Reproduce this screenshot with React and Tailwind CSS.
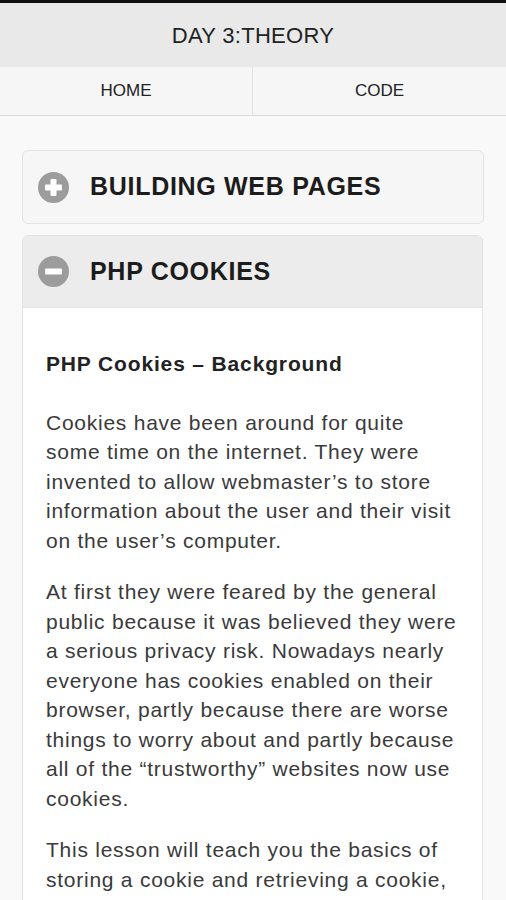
import React from "react";

const font = { fontFamily: '"Liberation Sans", Arial, sans-serif' };

function PlusIcon() {
  return (
    <svg width="31" height="31" viewBox="0 0 31 31" className="shrink-0">
      <circle cx="15.5" cy="15.5" r="15.5" fill="#9c9c9c" />
      <rect x="7" y="12.5" width="17" height="6" rx="1" fill="#fff" />
      <rect x="12.5" y="7" width="6" height="17" rx="1" fill="#fff" />
    </svg>
  );
}

function MinusIcon() {
  return (
    <svg width="31" height="31" viewBox="0 0 31 31" className="shrink-0">
      <circle cx="15.5" cy="15.5" r="15.5" fill="#9c9c9c" />
      <rect x="7" y="12.5" width="17" height="6" rx="1" fill="#fff" />
    </svg>
  );
}

export default function App() {
  return (
    <div className="min-h-[900px] bg-[#f9f9f9] text-[#222]" style={font}>
      <div className="h-[3px] bg-[#111]"></div>
      <header className="h-[64px] bg-[#e9e9e9] flex items-center justify-center">
        <h1 className="text-[22px] text-[#222] tracking-[0.3px]">DAY 3:THEORY</h1>
      </header>
      <nav className="h-[49px] bg-[#f6f6f6] border-b border-[#dcdcdc] flex">
        <div className="w-[253px] flex items-center justify-center border-r border-[#e2e2e2] text-[17px] text-[#222]">HOME</div>
        <div className="flex-1 flex items-center justify-center text-[17px] text-[#222]">CODE</div>
      </nav>

      <main className="px-[22px] pt-[34px]">
        <section className="rounded-[6px] border border-[#e3e3e3] bg-[#f6f6f6] h-[74px] flex items-center pl-[15px] gap-[21px] w-[462px]">
          <PlusIcon />
          <span className="text-[25px] font-bold text-[#1c1c1c] tracking-[0.7px]">BUILDING WEB PAGES</span>
        </section>

        <section className="mt-[11px] rounded-t-[6px] border border-[#e3e3e3] w-[461px] overflow-hidden">
          <div className="h-[72px] bg-[#ececec] flex items-center pl-[15px] gap-[21px] border-b border-[#e3e3e3]">
            <MinusIcon />
            <span className="text-[25px] font-bold text-[#1c1c1c] tracking-[0.7px]">PHP COOKIES</span>
          </div>
          <div className="bg-white px-[23px] pt-[41px] pb-[20px] text-[21px] leading-[29.5px] text-[#3a3a3a] tracking-[0.75px]">
            <p className="font-bold text-[#222] mb-[29px] tracking-[0.85px]">PHP Cookies – Background</p>
            <p className="mb-[22px]">
              Cookies have been around for quite some time on the internet. They were invented to allow webmaster’s to store information about the user and their visit on the user’s computer.
            </p>
            <p className="mb-[22px]">
              At first they were feared by the general public because it was believed they were a serious privacy risk. Nowadays nearly everyone has cookies enabled on their browser, partly because there are worse things to worry about and partly because all of the “trustworthy” websites now use cookies.
            </p>
            <p className="mb-[22px]">
              This lesson will teach you the basics of storing a cookie and retrieving a cookie, as well as explaining the various options you can set with your cookie.
            </p>
          </div>
        </section>
      </main>
    </div>
  );
}
